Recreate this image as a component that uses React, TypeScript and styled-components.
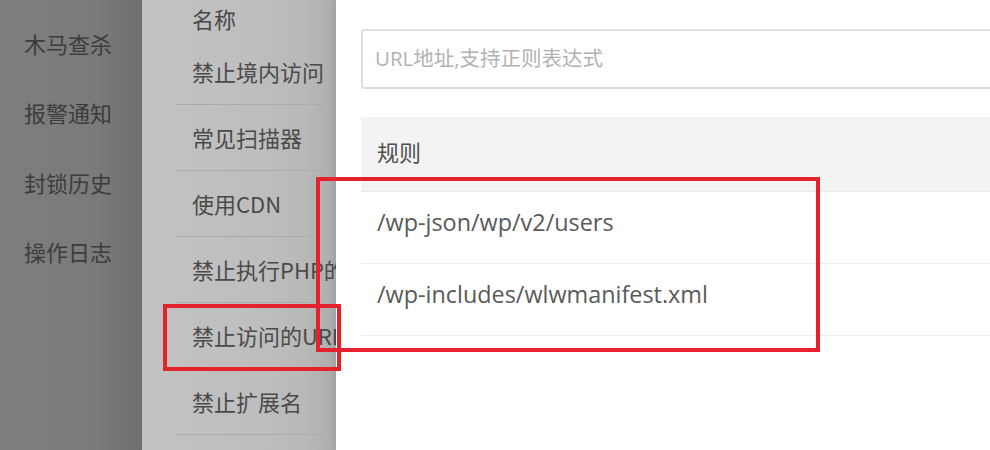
import React from "react";
import styled, { createGlobalStyle } from "styled-components";

const Global = createGlobalStyle`
  html, body { margin: 0; padding: 0; background: #fff; }
  body { font-family: "Open Sans", "Noto Sans CJK SC", sans-serif; }
  #root { width: 990px; height: 450px; overflow: hidden; }
`;

const Page = styled.div`
  position: relative;
  display: flex;
  width: 990px;
  height: 450px;
  overflow: hidden;
`;

const Sidebar = styled.nav`
  width: 142px;
  flex: none;
  background: linear-gradient(to right, #7e7e7e 0%, #7a7a7a 70%, #6f6f6f 100%);
  display: flex;
  flex-direction: column;
  padding-top: 8px;
  box-sizing: border-box;
`;

const NavItem = styled.div`
  height: 69.5px;
  display: flex;
  align-items: center;
  padding-left: 24px;
  font-family: "Noto Sans CJK SC", sans-serif;
  font-size: 22px;
  color: #3c3c3c;
`;

const Middle = styled.div`
  width: 194px;
  flex: none;
  display: flex;
  background: linear-gradient(to right, #c2c2c2 0%, #bebebe 60%, #b8b8b8 85%, #acacac 100%);
`;

const MiddleGutter = styled.div`
  width: 34px;
  flex: none;
`;

const NameColumn = styled.div`
  flex: 1;
  display: flex;
  flex-direction: column;
`;

const NameHeader = styled.div`
  height: 39px;
  display: flex;
  align-items: flex-start;
  padding: 4px 0 0 16px;
  box-sizing: border-box;
  font-family: "Noto Sans CJK SC", sans-serif;
  font-size: 22px;
  line-height: 28px;
  color: #474747;
`;

const NameRow = styled.div`
  height: 66px;
  flex: none;
  display: flex;
  align-items: center;
  padding: 0 0 2px 16px;
  box-sizing: border-box;
  border-bottom: 1px solid #acacac;
  font-family: "Noto Sans CJK SC", sans-serif;
  font-size: 22px;
  color: #4a4a4a;
  white-space: nowrap;
  overflow: hidden;
`;

const Drawer = styled.section`
  flex: 1;
  background: #fff;
  padding: 29px 0 0 25px;
  box-sizing: border-box;
  display: flex;
  flex-direction: column;
  box-shadow: -2px 0 6px rgba(0, 0, 0, 0.08);
`;

const UrlInput = styled.input`
  height: 60px;
  width: 680px;
  box-sizing: border-box;
  border: 2px solid #dedede;
  border-right: none;
  border-radius: 3px 0 0 3px;
  padding: 0 0 2px 12px;
  font-family: "Open Sans", "Noto Sans CJK SC", sans-serif;
  font-size: 20.5px;
  color: #555;
  outline: none;
  &::placeholder { color: #b2b2b2; }
`;

const Table = styled.div`
  margin-top: 28px;
  width: 680px;
  display: flex;
  flex-direction: column;
`;

const HeadRow = styled.div`
  height: 75px;
  background: #f3f3f3;
  border-bottom: 1px solid #e8e8e8;
  display: flex;
  align-items: center;
  padding: 0 0 6px 16px;
  box-sizing: border-box;
  font-family: "Noto Sans CJK SC", sans-serif;
  font-size: 22px;
  color: #505050;
`;

const RuleRow = styled.div`
  height: 72px;
  border-bottom: 1px solid #ececec;
  display: flex;
  align-items: center;
  padding: 0 0 12px 16px;
  box-sizing: border-box;
  font-family: "Open Sans", "Noto Sans CJK SC", sans-serif;
  font-size: 23.4px;
  color: #5a5a5a;
`;

const Mark = styled.div<{ $x: number; $y: number; $w: number; $h: number }>`
  position: absolute;
  left: ${(p) => p.$x}px;
  top: ${(p) => p.$y}px;
  width: ${(p) => p.$w}px;
  height: ${(p) => p.$h}px;
  border: 4px solid #e4222b;
  box-sizing: border-box;
  pointer-events: none;
`;

const navItems = ["木马查杀", "报警通知", "封锁历史", "操作日志"];
const names = ["禁止境内访问", "常见扫描器", "使用CDN", "禁止执行PHP的URL", "禁止访问的URL", "禁止扩展名"];
const rules = ["/wp-json/wp/v2/users", "/wp-includes/wlwmanifest.xml"];

export default function App() {
  return (
    <>
      <Global />
      <Page>
        <Sidebar>
          {navItems.map((n) => (
            <NavItem key={n}>{n}</NavItem>
          ))}
        </Sidebar>
        <Middle>
          <MiddleGutter />
          <NameColumn>
            <NameHeader>名称</NameHeader>
            {names.map((n) => (
              <NameRow key={n}>{n}</NameRow>
            ))}
          </NameColumn>
        </Middle>
        <Drawer>
          <UrlInput placeholder="URL地址,支持正则表达式" readOnly />
          <Table>
            <HeadRow>规则</HeadRow>
            {rules.map((r) => (
              <RuleRow key={r}>{r}</RuleRow>
            ))}
          </Table>
        </Drawer>
        <Mark $x={163} $y={304} $w={178} $h={67} />
        <Mark $x={316} $y={177} $w={504} $h={175} />
      </Page>
    </>
  );
}
